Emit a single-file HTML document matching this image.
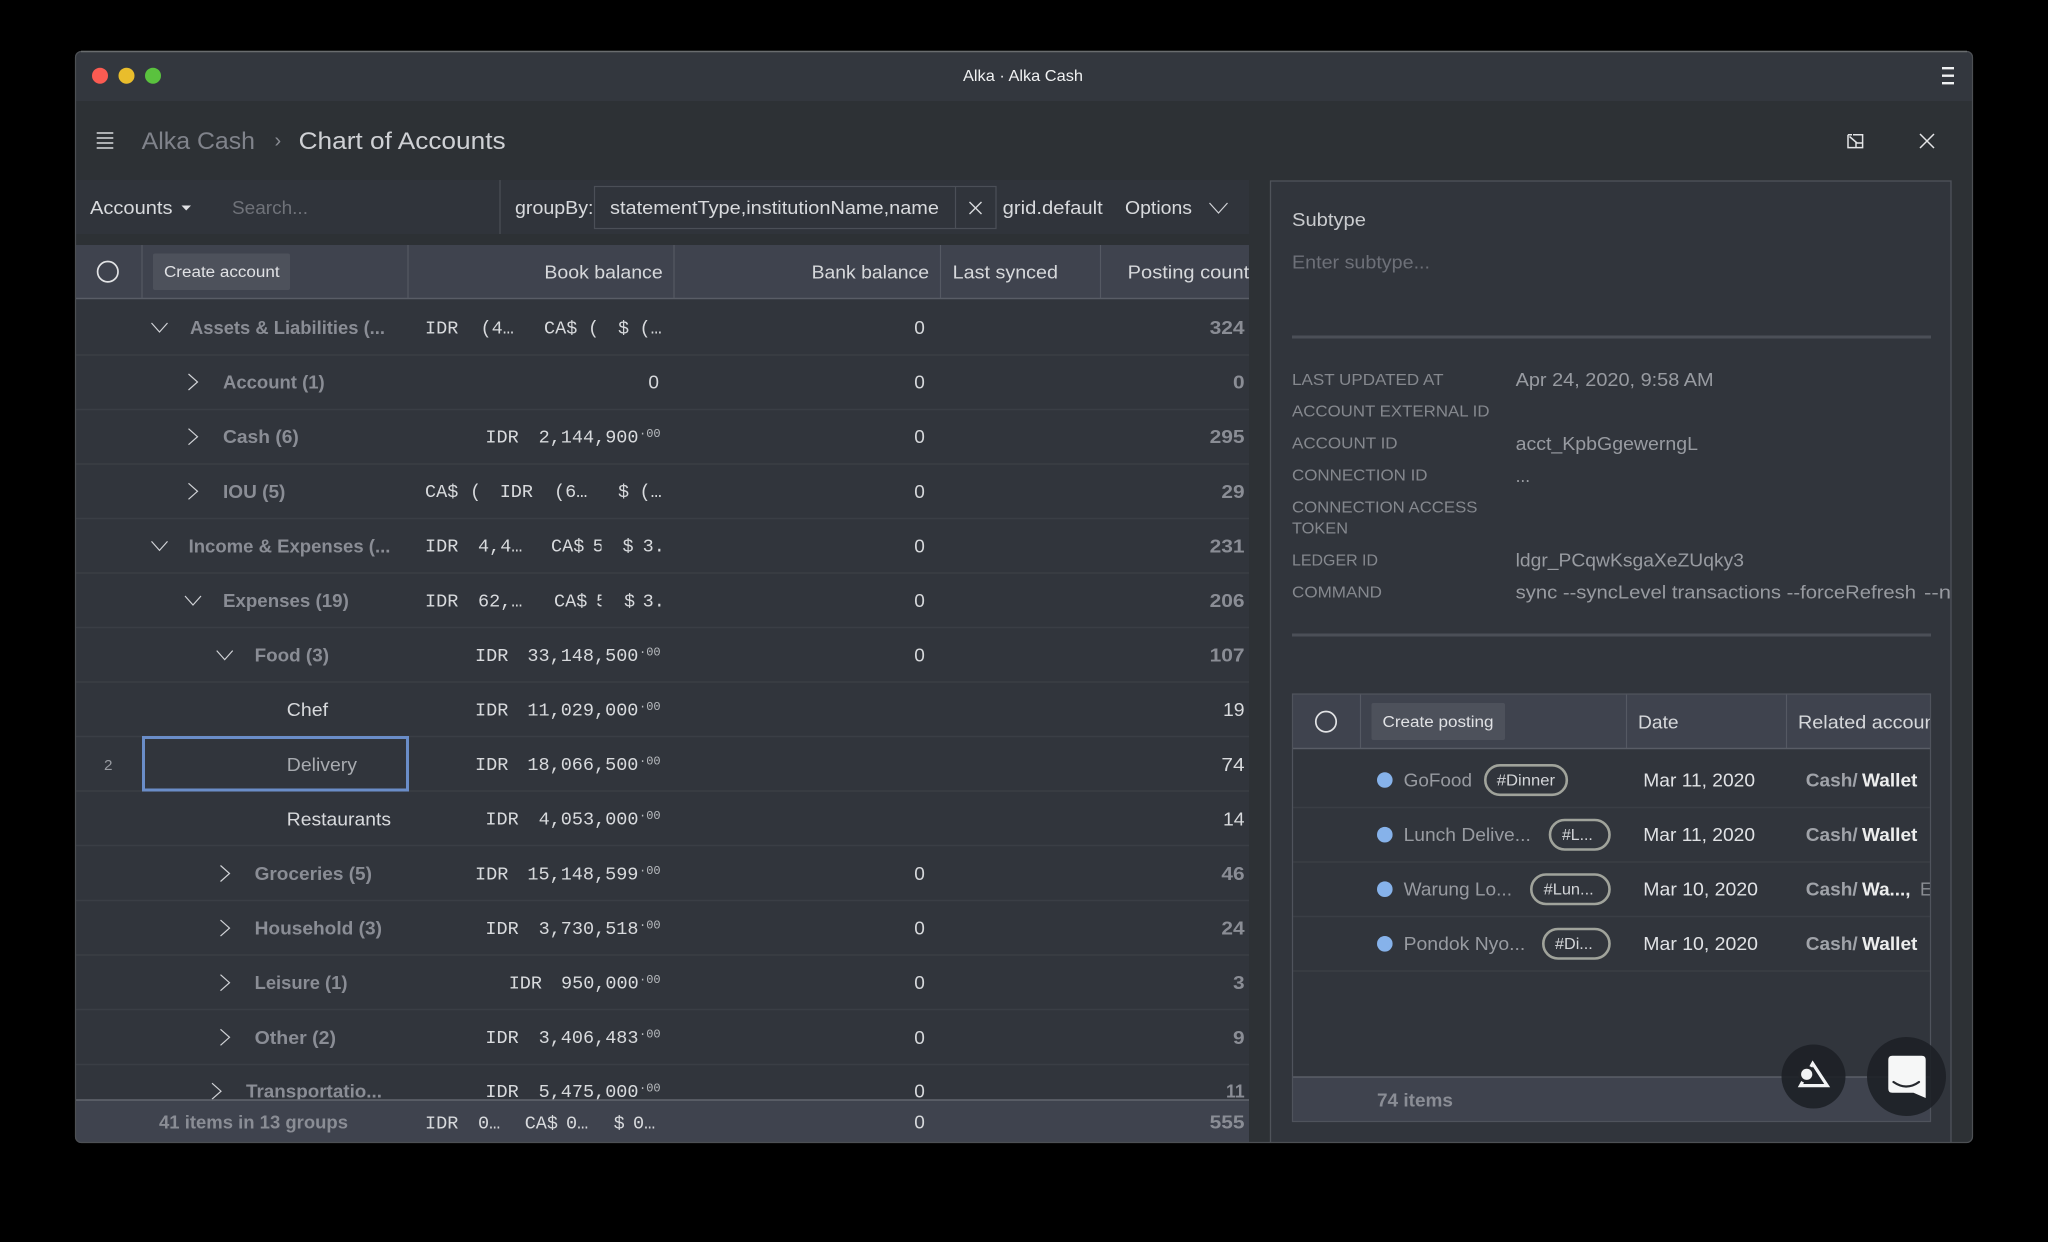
<!DOCTYPE html>
<html lang="en">
<head>
<meta charset="utf-8">
<title>Alka · Alka Cash</title>
<style>
html,body{margin:0;padding:0;background:#000;width:2048px;height:1242px;overflow:hidden}
svg{display:block}
text{font-family:"Liberation Sans",sans-serif;font-size:18px;fill:#d6d8db}
.t{fill:#d8dadd}
.g{font-weight:bold;fill:#8a8d95}
.w{fill:#d8dadd}
.m{font-family:"Liberation Mono",monospace;font-size:18.5px;fill:#d8dadd;transform:translateY(-.7px)}
.s{font-family:"Liberation Mono",monospace;font-size:12px;fill:#b8bbbf}
.n{fill:#d6d8db}
.c{font-weight:bold;fill:#8a8d95}
.cw{fill:#d8dadd}
.k{font-size:16px;fill:#85888e}
.v{fill:#989ba1}
.ch{fill:none;stroke:#d0d2d6;stroke-width:1.2}
.ln{stroke:#3a3e45;stroke-width:1.5}
.sep{stroke:#555963;stroke-width:1.2}
</style>
</head>
<body>
<svg width="2048" height="1242" viewBox="0 0 2048 1242" xmlns="http://www.w3.org/2000/svg">
<defs>
<path id="d" class="ch" d="M-8,-4.5 L0,4.5 L8,-4.5"/>
<path id="r" class="ch" d="M-4.5,-8 L4.5,0 L-4.5,8"/>
<clipPath id="win"><rect x="75" y="51" width="1898" height="1092" rx="6"/></clipPath>
<clipPath id="panel"><rect x="1271" y="181" width="680" height="962"/></clipPath>
<clipPath id="tbl"><rect x="1292" y="694" width="639" height="430"/></clipPath>
<clipPath id="c5"><rect x="540" y="530" width="61.5" height="100"/></clipPath>
</defs>

<rect width="2048" height="1242" fill="#000"/>

<!-- window -->
<g clip-path="url(#win)">
<rect x="75" y="51" width="1898" height="1092" fill="#2d3135"/>
<rect x="75" y="51" width="1898" height="50" fill="#33373e"/>

<!-- toolbar -->
<rect x="75" y="180" width="1174" height="54" fill="#30343b"/>
<line x1="500" y1="180" x2="500" y2="234" stroke="#454951" stroke-width="1.5"/>

<!-- main table body -->
<rect x="75" y="299" width="1174" height="801" fill="#31353c"/>
<rect x="75" y="245" width="1174" height="53" fill="#3f434e"/>
<line x1="75" y1="298.5" x2="1249" y2="298.5" stroke="#595d66" stroke-width="1.5"/>
<g class="ln">
<line x1="75" y1="355" x2="1249" y2="355"/><line x1="75" y1="409.5" x2="1249" y2="409.5"/>
<line x1="75" y1="464" x2="1249" y2="464"/><line x1="75" y1="518.5" x2="1249" y2="518.5"/>
<line x1="75" y1="573" x2="1249" y2="573"/><line x1="75" y1="627.5" x2="1249" y2="627.5"/>
<line x1="75" y1="682" x2="1249" y2="682"/><line x1="75" y1="736.5" x2="1249" y2="736.5"/>
<line x1="75" y1="791" x2="1249" y2="791"/><line x1="75" y1="845.5" x2="1249" y2="845.5"/>
<line x1="75" y1="900.5" x2="1249" y2="900.5"/><line x1="75" y1="955" x2="1249" y2="955"/>
<line x1="75" y1="1009.5" x2="1249" y2="1009.5"/><line x1="75" y1="1064.5" x2="1249" y2="1064.5"/>
</g>

<!-- main header -->
<g class="sep">
<line x1="142" y1="245" x2="142" y2="298"/><line x1="408" y1="245" x2="408" y2="298"/>
<line x1="674" y1="245" x2="674" y2="298"/><line x1="940.5" y1="245" x2="940.5" y2="298"/>
<line x1="1100.5" y1="245" x2="1100.5" y2="298"/>
</g>
<circle cx="107.8" cy="271.7" r="10.2" fill="none" stroke="#e2e3e5" stroke-width="1.7"/>
<rect x="153" y="253.5" width="137" height="36.5" rx="2" fill="#4d515b"/>
<text x="164" y="277" style="font-size:15.5px;fill:#e0e1e4" textLength="115.6" lengthAdjust="spacingAndGlyphs">Create account</text>
<text x="544.4" y="278.5" textLength="118.3" lengthAdjust="spacingAndGlyphs">Book balance</text>
<text x="811.6" y="278.5" textLength="117.4" lengthAdjust="spacingAndGlyphs">Bank balance</text>
<text x="952.7" y="278.5" textLength="105.3" lengthAdjust="spacingAndGlyphs">Last synced</text>
<text x="1127.7" y="278.5" textLength="121.5" lengthAdjust="spacingAndGlyphs">Posting count</text>

<!-- chevrons -->
<use href="#d" x="159.5" y="327.5"/>
<use href="#r" x="193" y="382"/>
<use href="#r" x="193" y="436.7"/>
<use href="#r" x="193" y="491.3"/>
<use href="#d" x="159.5" y="545.9"/>
<use href="#d" x="193" y="600.5"/>
<use href="#d" x="224.7" y="655.1"/>
<use href="#r" x="225" y="873.5"/>
<use href="#r" x="225" y="928.1"/>
<use href="#r" x="225" y="982.7"/>
<use href="#r" x="225" y="1037.3"/>
<use href="#r" x="216.5" y="1091.2"/>

<!-- name labels -->
<text class="g" x="190" y="334" textLength="195" lengthAdjust="spacingAndGlyphs">Assets &amp; Liabilities (...</text>
<text class="g" x="223" y="388.6" textLength="101.7" lengthAdjust="spacingAndGlyphs">Account (1)</text>
<text class="g" x="223" y="443.2" textLength="75.8" lengthAdjust="spacingAndGlyphs">Cash (6)</text>
<text class="g" x="223" y="497.8" textLength="62.4" lengthAdjust="spacingAndGlyphs">IOU (5)</text>
<text class="g" x="188.6" y="552.4" textLength="201.8" lengthAdjust="spacingAndGlyphs">Income &amp; Expenses (...</text>
<text class="g" x="223" y="607" textLength="125.8" lengthAdjust="spacingAndGlyphs">Expenses (19)</text>
<text class="g" x="254.6" y="661.6" textLength="74.4" lengthAdjust="spacingAndGlyphs">Food (3)</text>
<text class="w" x="286.8" y="716.2" textLength="41.2" lengthAdjust="spacingAndGlyphs">Chef</text>
<text x="286.8" y="770.8" style="fill:#a8abb0" textLength="70.2" lengthAdjust="spacingAndGlyphs">Delivery</text>
<text class="w" x="286.8" y="825.4" textLength="104.2" lengthAdjust="spacingAndGlyphs">Restaurants</text>
<text class="g" x="254.6" y="880" textLength="117.4" lengthAdjust="spacingAndGlyphs">Groceries (5)</text>
<text class="g" x="254.6" y="934.6" textLength="127.4" lengthAdjust="spacingAndGlyphs">Household (3)</text>
<text class="g" x="254.6" y="989.2" textLength="92.9" lengthAdjust="spacingAndGlyphs">Leisure (1)</text>
<text class="g" x="254.6" y="1043.8" textLength="81.4" lengthAdjust="spacingAndGlyphs">Other (2)</text>
<text class="g" x="246" y="1097.6" textLength="136" lengthAdjust="spacingAndGlyphs">Transportatio...</text>

<!-- book balances -->
<text class="m" y="334"><tspan x="425">IDR</tspan><tspan x="480.5">(4…</tspan><tspan x="544">CA$</tspan><tspan x="588">(</tspan><tspan x="618">$</tspan><tspan x="639.5">(…</tspan></text>
<text class="n" x="648.4" y="388.6" textLength="10.6" lengthAdjust="spacingAndGlyphs">0</text>
<text class="m" y="443.2"><tspan x="485.4">IDR</tspan><tspan x="538.6">2,144,900</tspan></text><text class="s" x="639" y="437">·00</text>
<text class="m" y="497.8"><tspan x="425">CA$</tspan><tspan x="470">(</tspan><tspan x="499.7">IDR</tspan><tspan x="554">(6…</tspan><tspan x="618">$</tspan><tspan x="639.5">(…</tspan></text>
<text class="m" y="552.4"><tspan x="425">IDR</tspan><tspan x="478">4,4…</tspan></text>
<text class="m" y="552.4" clip-path="url(#c5)"><tspan x="551">CA$</tspan><tspan x="592.6">5</tspan></text>
<text class="m" y="552.4"><tspan x="622.5">$</tspan><tspan x="642.6">3.</tspan></text>
<text class="m" y="607"><tspan x="425">IDR</tspan><tspan x="478">62,…</tspan></text>
<text class="m" y="607" clip-path="url(#c5)"><tspan x="554">CA$</tspan><tspan x="596">5</tspan></text>
<text class="m" y="607"><tspan x="624">$</tspan><tspan x="642.6">3.</tspan></text>
<text class="m" y="661.6"><tspan x="475">IDR</tspan><tspan x="527.4">33,148,500</tspan></text><text class="s" x="639" y="655.5">·00</text>
<text class="m" y="716.2"><tspan x="475">IDR</tspan><tspan x="527.4">11,029,000</tspan></text><text class="s" x="639" y="710">·00</text>
<text class="m" y="770.8"><tspan x="475">IDR</tspan><tspan x="527.4">18,066,500</tspan></text><text class="s" x="639" y="764.6">·00</text>
<text class="m" y="825.4"><tspan x="485.4">IDR</tspan><tspan x="538.6">4,053,000</tspan></text><text class="s" x="639" y="819.2">·00</text>
<text class="m" y="880"><tspan x="475">IDR</tspan><tspan x="527.4">15,148,599</tspan></text><text class="s" x="639" y="873.8">·00</text>
<text class="m" y="934.6"><tspan x="485.4">IDR</tspan><tspan x="538.6">3,730,518</tspan></text><text class="s" x="639" y="928.4">·00</text>
<text class="m" y="989.2"><tspan x="508.7">IDR</tspan><tspan x="561">950,000</tspan></text><text class="s" x="639" y="983">·00</text>
<text class="m" y="1043.8"><tspan x="485.4">IDR</tspan><tspan x="538.6">3,406,483</tspan></text><text class="s" x="639" y="1037.6">·00</text>
<text class="m" y="1097.8"><tspan x="485.4">IDR</tspan><tspan x="538.6">5,475,000</tspan></text><text class="s" x="639" y="1091.4">·00</text>

<!-- bank balances -->
<text class="n" x="914.3" y="334" textLength="10.6" lengthAdjust="spacingAndGlyphs">0</text>
<text class="n" x="914.3" y="388.6" textLength="10.6" lengthAdjust="spacingAndGlyphs">0</text>
<text class="n" x="914.3" y="443.2" textLength="10.6" lengthAdjust="spacingAndGlyphs">0</text>
<text class="n" x="914.3" y="497.8" textLength="10.6" lengthAdjust="spacingAndGlyphs">0</text>
<text class="n" x="914.3" y="552.4" textLength="10.6" lengthAdjust="spacingAndGlyphs">0</text>
<text class="n" x="914.3" y="607" textLength="10.6" lengthAdjust="spacingAndGlyphs">0</text>
<text class="n" x="914.3" y="661.6" textLength="10.6" lengthAdjust="spacingAndGlyphs">0</text>
<text class="n" x="914.3" y="880" textLength="10.6" lengthAdjust="spacingAndGlyphs">0</text>
<text class="n" x="914.3" y="934.6" textLength="10.6" lengthAdjust="spacingAndGlyphs">0</text>
<text class="n" x="914.3" y="989.2" textLength="10.6" lengthAdjust="spacingAndGlyphs">0</text>
<text class="n" x="914.3" y="1043.8" textLength="10.6" lengthAdjust="spacingAndGlyphs">0</text>
<text class="n" x="914.3" y="1097.6" textLength="10.6" lengthAdjust="spacingAndGlyphs">0</text>

<!-- posting counts -->
<text class="c" x="1209.6" y="334" textLength="35" lengthAdjust="spacingAndGlyphs">324</text>
<text class="c" x="1233" y="388.6" textLength="11.6" lengthAdjust="spacingAndGlyphs">0</text>
<text class="c" x="1209.6" y="443.2" textLength="35" lengthAdjust="spacingAndGlyphs">295</text>
<text class="c" x="1221.4" y="497.8" textLength="23.2" lengthAdjust="spacingAndGlyphs">29</text>
<text class="c" x="1209.6" y="552.4" textLength="35" lengthAdjust="spacingAndGlyphs">231</text>
<text class="c" x="1209.6" y="607" textLength="35" lengthAdjust="spacingAndGlyphs">206</text>
<text class="c" x="1209.6" y="661.6" textLength="35" lengthAdjust="spacingAndGlyphs">107</text>
<text class="cw" x="1223" y="716.2" textLength="21.6" lengthAdjust="spacingAndGlyphs">19</text>
<text class="cw" x="1221.4" y="770.8" textLength="23.2" lengthAdjust="spacingAndGlyphs">74</text>
<text class="cw" x="1223" y="825.4" textLength="21.6" lengthAdjust="spacingAndGlyphs">14</text>
<text class="c" x="1221.4" y="880" textLength="23.2" lengthAdjust="spacingAndGlyphs">46</text>
<text class="c" x="1221.4" y="934.6" textLength="23.2" lengthAdjust="spacingAndGlyphs">24</text>
<text class="c" x="1233" y="989.2" textLength="11.6" lengthAdjust="spacingAndGlyphs">3</text>
<text class="c" x="1233" y="1043.8" textLength="11.6" lengthAdjust="spacingAndGlyphs">9</text>
<text class="c" x="1226" y="1097.6" textLength="18.6" lengthAdjust="spacingAndGlyphs">11</text>

<!-- selected cell -->
<rect x="143.5" y="737.5" width="264" height="52.5" fill="none" stroke="#6a8dc8" stroke-width="3"/>
<text x="104" y="769.8" style="font-size:15px;fill:#9a9da3" textLength="8.5" lengthAdjust="spacingAndGlyphs">2</text>

<!-- main footer -->
<rect x="75" y="1100" width="1174" height="43" fill="#3f434e"/>
<line x1="75" y1="1100" x2="1249" y2="1100" stroke="#62666e" stroke-width="1.5"/>
<text class="g" x="159" y="1128.5" textLength="189" lengthAdjust="spacingAndGlyphs">41 items in 13 groups</text>
<text class="m" y="1129"><tspan x="425">IDR</tspan><tspan x="478">0…</tspan><tspan x="524.7">CA$</tspan><tspan x="566">0…</tspan><tspan x="613.6">$</tspan><tspan x="633">0…</tspan></text>
<text class="n" x="914.3" y="1128.5" textLength="10.6" lengthAdjust="spacingAndGlyphs">0</text>
<text class="c" x="1209.6" y="1128.5" textLength="35" lengthAdjust="spacingAndGlyphs">555</text>

<!-- title bar -->
<circle cx="100" cy="75.7" r="8" fill="#fb5b52"/>
<circle cx="126.5" cy="75.7" r="8" fill="#e9bd2c"/>
<circle cx="153" cy="75.7" r="8" fill="#5ac23e"/>
<text x="963" y="81.2" style="font-size:16px;fill:#f0f1f2" textLength="120" lengthAdjust="spacingAndGlyphs">Alka · Alka Cash</text>
<rect x="1942" y="67" width="12" height="2.4" fill="#f0f1f2"/>
<rect x="1942" y="74.5" width="12" height="2.4" fill="#f0f1f2"/>
<rect x="1942" y="82" width="12" height="2.4" fill="#f0f1f2"/>

<!-- header -->
<g stroke="#d8dadd" stroke-width="1.6">
<line x1="96.7" y1="133" x2="113.3" y2="133"/><line x1="96.7" y1="138" x2="113.3" y2="138"/>
<line x1="96.7" y1="143" x2="113.3" y2="143"/><line x1="96.7" y1="148" x2="113.3" y2="148"/>
</g>
<text x="141.7" y="149" style="font-size:24px;fill:#80838b" textLength="113.3" lengthAdjust="spacingAndGlyphs">Alka Cash</text>
<text x="274.5" y="147" style="font-size:20px;fill:#8a8d94">›</text>
<text x="298.6" y="149" style="font-size:24px;fill:#cfd1d5" textLength="207" lengthAdjust="spacingAndGlyphs">Chart of Accounts</text>
<g fill="none" stroke="#e4e5e7" stroke-width="1.5">
<path d="M1853,134.8 H1862.6 V147.6 H1848 V139"/>
<path d="M1856,147.6 V143 H1862.6"/>
<path d="M1857,143 L1849.5,136.5 M1848,134.8 H1852 M1848,134.8 V139"/>
<path d="M1920,134 L1934,148 M1934,134 L1920,148"/>
</g>

<!-- toolbar text -->
<text class="t" x="90" y="214" textLength="82.5" lengthAdjust="spacingAndGlyphs">Accounts</text>
<path d="M181.5,205.5 H191 L186.2,210.5 Z" fill="#e0e1e4"/>
<text x="232" y="214" style="fill:#6f7279" textLength="76" lengthAdjust="spacingAndGlyphs">Search...</text>
<text class="t" x="515" y="214" textLength="78.5" lengthAdjust="spacingAndGlyphs">groupBy:</text>
<rect x="594.5" y="186.5" width="401.5" height="42" fill="#30343b" stroke="#4b4f57" stroke-width="1.2"/>
<line x1="955.5" y1="186.5" x2="955.5" y2="228.5" stroke="#4b4f57" stroke-width="1.2"/>
<text class="t" x="610" y="214" textLength="329" lengthAdjust="spacingAndGlyphs">statementType,institutionName,name</text>
<path d="M969.5,202 L981.5,214 M981.5,202 L969.5,214" fill="none" stroke="#d8dadd" stroke-width="1.4"/>
<text class="t" x="1002.7" y="214" textLength="100" lengthAdjust="spacingAndGlyphs">grid.default</text>
<text class="t" x="1125" y="214" textLength="67" lengthAdjust="spacingAndGlyphs">Options</text>
<path d="M1209.5,203 L1218.5,213 L1227.5,203" class="ch"/>

<!-- right panel -->
<rect x="1270.5" y="181" width="680.5" height="970" fill="#31353c" stroke="#4f535a" stroke-width="1.3"/>
<g clip-path="url(#panel)">
<text x="1292" y="226" style="fill:#c9cbce" textLength="74" lengthAdjust="spacingAndGlyphs">Subtype</text>
<text x="1292" y="268.5" style="fill:#6d7078" textLength="138" lengthAdjust="spacingAndGlyphs">Enter subtype...</text>
<rect x="1292" y="335.5" width="639" height="3" fill="#4b4f57"/>

<text class="k" x="1292" y="385" textLength="151.5" lengthAdjust="spacingAndGlyphs">LAST UPDATED AT</text>
<text class="k" x="1292" y="416.7" textLength="197.5" lengthAdjust="spacingAndGlyphs">ACCOUNT EXTERNAL ID</text>
<text class="k" x="1292" y="448.7" textLength="105.6" lengthAdjust="spacingAndGlyphs">ACCOUNT ID</text>
<text class="k" x="1292" y="480.7" textLength="135.5" lengthAdjust="spacingAndGlyphs">CONNECTION ID</text>
<text class="k" x="1292" y="512.7" textLength="185.5" lengthAdjust="spacingAndGlyphs">CONNECTION ACCESS</text>
<text class="k" x="1292" y="533.7" textLength="56" lengthAdjust="spacingAndGlyphs">TOKEN</text>
<text class="k" x="1292" y="565.7" textLength="86" lengthAdjust="spacingAndGlyphs">LEDGER ID</text>
<text class="k" x="1292" y="597.7" textLength="90" lengthAdjust="spacingAndGlyphs">COMMAND</text>

<text class="v" x="1515.6" y="386" textLength="198" lengthAdjust="spacingAndGlyphs">Apr 24, 2020, 9:58 AM</text>
<text class="v" x="1515.6" y="450" textLength="182.4" lengthAdjust="spacingAndGlyphs">acct_KpbGgewerngL</text>
<text class="v" x="1515.6" y="482" textLength="14.5" lengthAdjust="spacingAndGlyphs">...</text>
<text class="v" x="1515.6" y="566.5" textLength="228.4" lengthAdjust="spacingAndGlyphs">ldgr_PCqwKsgaXeZUqky3</text>
<text class="v" x="1515.6" y="598.5" textLength="400.4" lengthAdjust="spacingAndGlyphs">sync --syncLevel transactions --forceRefresh</text>
<text class="v" x="1924" y="598.5" textLength="27" lengthAdjust="spacingAndGlyphs">--n</text>
<rect x="1292" y="633.5" width="639" height="3" fill="#4b4f57"/>

<!-- sub table -->
<g clip-path="url(#tbl)">
<rect x="1292" y="694" width="639" height="54.5" fill="#3f434e"/>
<line x1="1292" y1="748.5" x2="1931" y2="748.5" stroke="#595d66" stroke-width="1.5"/>
<line x1="1292" y1="694" x2="1931" y2="694" stroke="#4f535c" stroke-width="1.2"/>
<g class="sep">
<line x1="1360.5" y1="694" x2="1360.5" y2="748"/><line x1="1626.5" y1="694" x2="1626.5" y2="748"/>
<line x1="1786.5" y1="694" x2="1786.5" y2="748"/>
</g>
<circle cx="1326" cy="721.7" r="10.2" fill="none" stroke="#e2e3e5" stroke-width="1.7"/>
<rect x="1371.5" y="703" width="133.5" height="37" rx="2" fill="#4d515b"/>
<text x="1382.5" y="727" style="font-size:15.5px;fill:#e0e1e4" textLength="111" lengthAdjust="spacingAndGlyphs">Create posting</text>
<text x="1638" y="728.5" textLength="40.6" lengthAdjust="spacingAndGlyphs">Date</text>
<text x="1798" y="728.5" textLength="143" lengthAdjust="spacingAndGlyphs">Related account</text>

<g class="ln">
<line x1="1292" y1="807.5" x2="1931" y2="807.5"/><line x1="1292" y1="862" x2="1931" y2="862"/>
<line x1="1292" y1="916.5" x2="1931" y2="916.5"/><line x1="1292" y1="971" x2="1931" y2="971"/>
</g>
<circle cx="1384.8" cy="780" r="7.8" fill="#86b2ea"/>
<circle cx="1384.8" cy="834.7" r="7.8" fill="#86b2ea"/>
<circle cx="1384.8" cy="889.2" r="7.8" fill="#86b2ea"/>
<circle cx="1384.8" cy="943.8" r="7.8" fill="#86b2ea"/>

<text class="v" x="1403.6" y="786.5" textLength="68.4" lengthAdjust="spacingAndGlyphs">GoFood</text>
<text class="v" x="1403.6" y="841" textLength="127.2" lengthAdjust="spacingAndGlyphs">Lunch Delive...</text>
<text class="v" x="1403.6" y="895.5" textLength="108.4" lengthAdjust="spacingAndGlyphs">Warung Lo...</text>
<text class="v" x="1403.6" y="950" textLength="121.7" lengthAdjust="spacingAndGlyphs">Pondok Nyo...</text>

<g fill="none" stroke="#a0a39b" stroke-width="2.6">
<rect x="1485.3" y="765.3" width="81.5" height="29.5" rx="14.7"/>
<rect x="1550" y="820" width="59.5" height="29.5" rx="14.7"/>
<rect x="1531.3" y="874.5" width="78.2" height="29.5" rx="14.7"/>
<rect x="1543.3" y="929" width="66.2" height="29.5" rx="14.7"/>
</g>
<text x="1496.8" y="785.5" style="font-size:15.5px;fill:#d4d6d9" textLength="58.2" lengthAdjust="spacingAndGlyphs">#Dinner</text>
<text x="1562" y="840.2" style="font-size:15.5px;fill:#d4d6d9" textLength="30.8" lengthAdjust="spacingAndGlyphs">#L...</text>
<text x="1543.6" y="894.7" style="font-size:15.5px;fill:#d4d6d9" textLength="50.1" lengthAdjust="spacingAndGlyphs">#Lun...</text>
<text x="1555" y="949.2" style="font-size:15.5px;fill:#d4d6d9" textLength="37.8" lengthAdjust="spacingAndGlyphs">#Di...</text>
<text x="1643.3" y="786.5" style="fill:#e0e2e5" textLength="111.7" lengthAdjust="spacingAndGlyphs">Mar 11, 2020</text>
<text x="1643.3" y="841" style="fill:#e0e2e5" textLength="111.7" lengthAdjust="spacingAndGlyphs">Mar 11, 2020</text>
<text x="1643.3" y="895.5" style="fill:#e0e2e5" textLength="114.7" lengthAdjust="spacingAndGlyphs">Mar 10, 2020</text>
<text x="1643.3" y="950" style="fill:#e0e2e5" textLength="114.7" lengthAdjust="spacingAndGlyphs">Mar 10, 2020</text>

<text class="g" x="1805.8" y="786.5" style="fill:#a0a3a9" textLength="51.9" lengthAdjust="spacingAndGlyphs">Cash/</text>
<text class="g" x="1805.8" y="841" style="fill:#a0a3a9" textLength="51.9" lengthAdjust="spacingAndGlyphs">Cash/</text>
<text class="g" x="1805.8" y="895.5" style="fill:#a0a3a9" textLength="51.9" lengthAdjust="spacingAndGlyphs">Cash/</text>
<text class="g" x="1805.8" y="950" style="fill:#a0a3a9" textLength="51.9" lengthAdjust="spacingAndGlyphs">Cash/</text>
<text x="1862" y="786.5" style="font-weight:bold;fill:#eceded" textLength="55.4" lengthAdjust="spacingAndGlyphs">Wallet</text>
<text x="1862" y="841" style="font-weight:bold;fill:#eceded" textLength="55.4" lengthAdjust="spacingAndGlyphs">Wallet</text>
<text x="1862" y="895.5" style="font-weight:bold;fill:#eceded" textLength="48.5" lengthAdjust="spacingAndGlyphs">Wa...,</text>
<text x="1920" y="895.5" style="fill:#8b8e94">E</text>
<text x="1862" y="950" style="font-weight:bold;fill:#eceded" textLength="55.4" lengthAdjust="spacingAndGlyphs">Wallet</text>

<rect x="1292" y="1077" width="639" height="45" fill="#3f434e"/>
<line x1="1292" y1="1077" x2="1931" y2="1077" stroke="#62666e" stroke-width="1.3"/>
<text class="g" x="1377" y="1106.5" textLength="76" lengthAdjust="spacingAndGlyphs">74 items</text>
</g>
<rect x="1292.5" y="694" width="638" height="427.5" fill="none" stroke="#4f535c" stroke-width="1.2"/>
</g>
</g>

<!-- window border -->
<rect x="75.5" y="51.5" width="1897" height="1091" rx="6" fill="none" stroke="#4d5054" stroke-width="1.2"/>
<path d="M81,51.5 H1967" stroke="#696c6e" stroke-width="1.4" fill="none"/>

<!-- floating buttons -->
<circle cx="1813.5" cy="1076.5" r="32" fill="#1d2025" fill-opacity=".88"/>
<path d="M1812.7,1063.5 L1827.2,1085.6 H1800.5 Z" fill="none" stroke="#f2f3f4" stroke-width="3.2" stroke-linejoin="miter"/>
<circle cx="1806.7" cy="1074.3" r="8.6" fill="#212429"/>
<circle cx="1806.7" cy="1074.3" r="5.6" fill="#f2f3f4"/>
<circle cx="1906.5" cy="1076.5" r="39.5" fill="#1d2025" fill-opacity=".88"/>
<path d="M1892.3,1055.7 H1921.7 Q1925.7,1055.7 1925.7,1059.7 V1098 L1913.5,1092.7 H1892.3 Q1888.3,1092.7 1888.3,1088.7 V1059.7 Q1888.3,1055.7 1892.3,1055.7 Z" fill="#f6f7f7"/>
<path d="M1893.5,1082 Q1906.5,1091 1919,1082" fill="none" stroke="#25282d" stroke-width="2.2" stroke-linecap="round"/>
</svg>
</body>
</html>
